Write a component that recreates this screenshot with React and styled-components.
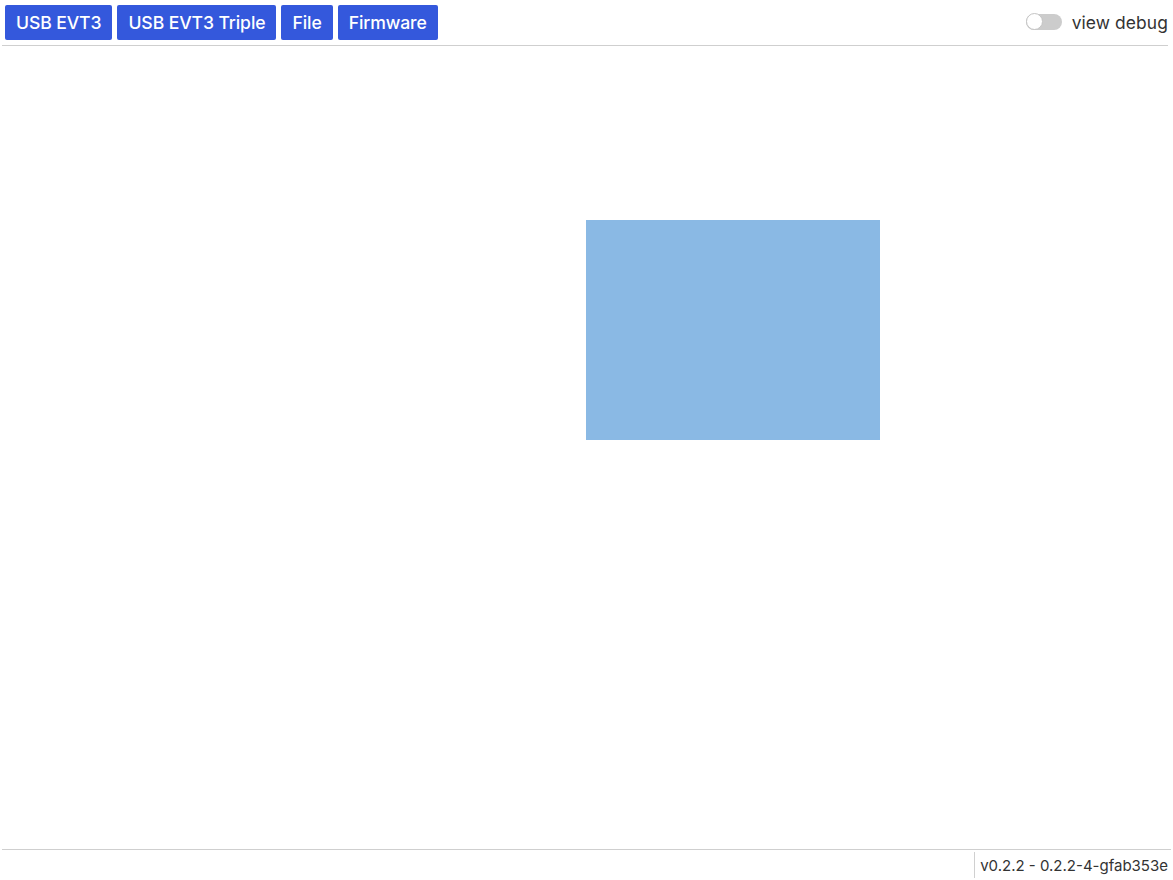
import React from 'react';
import styled, { createGlobalStyle } from 'styled-components';

const GlobalStyle = createGlobalStyle`
  html, body {
    margin: 0;
    padding: 0;
    background: #fff;
  }
  body {
    font-family: 'Inter', 'Noto Sans', sans-serif;
    color: #222;
  }
`;

const Container = styled.div`
  display: flex;
  flex-direction: column;
  height: 880px;
  width: 1173px;
  overflow: hidden;
`;

const Toolbar = styled.div`
  display: flex;
  align-items: flex-start;
  justify-content: space-between;
  height: 40px;
  margin: 0 5px 0 2px;
  padding: 5px 0 0 3px;
  border-bottom: 1px solid #cfcfcf;
`;

const ButtonGroup = styled.div`
  display: flex;
  gap: 5px;
`;

const Button = styled.button`
  height: 35px;
  padding: 0 11px;
  border: none;
  border-radius: 2px;
  background-color: #3458dc;
  color: #fff;
  font-family: 'Inter', 'Noto Sans', sans-serif;
  font-size: 17.6px;
  font-weight: 500;
  letter-spacing: -0.1px;
  cursor: pointer;
`;

const DebugToggle = styled.label`
  display: flex;
  align-items: center;
  gap: 10px;
  height: 34px;
  font-size: 17.4px;
  letter-spacing: 0.1px;
  color: #333;
`;

const Track = styled.span`
  position: relative;
  display: inline-block;
  width: 36px;
  height: 16px;
  border-radius: 8px;
  background-color: #cccccc;
`;

const Knob = styled.span`
  position: absolute;
  top: -1px;
  left: 0;
  width: 17px;
  height: 17px;
  border-radius: 50%;
  background: #fff;
  border: 1px solid #c4c4c4;
  box-sizing: border-box;
`;

const Main = styled.div`
  flex: 1;
  display: flex;
  justify-content: flex-start;
  align-items: flex-start;
  padding: 174px 0 0 586px;
`;

const Preview = styled.div`
  width: 294px;
  height: 220px;
  background-color: #8ab9e4;
`;

const Footer = styled.div`
  display: flex;
  justify-content: flex-end;
  align-items: center;
  height: 30px;
  margin: 0 2px;
  border-top: 1px solid #cfcfcf;
`;

const Version = styled.span`
  padding: 2px 3px 0 5px;
  border-left: 1px solid #d0d0d0;
  font-size: 15px;
  line-height: 24px;
  color: #333;
`;

export default function App() {
  return (
    <Container>
      <GlobalStyle />
      <Toolbar>
        <ButtonGroup>
          <Button>USB EVT3</Button>
          <Button>USB EVT3 Triple</Button>
          <Button>File</Button>
          <Button>Firmware</Button>
        </ButtonGroup>
        <DebugToggle>
          <Track>
            <Knob />
          </Track>
          view debug
        </DebugToggle>
      </Toolbar>
      <Main>
        <Preview />
      </Main>
      <Footer>
        <Version>v0.2.2 - 0.2.2-4-gfab353e</Version>
      </Footer>
    </Container>
  );
}
